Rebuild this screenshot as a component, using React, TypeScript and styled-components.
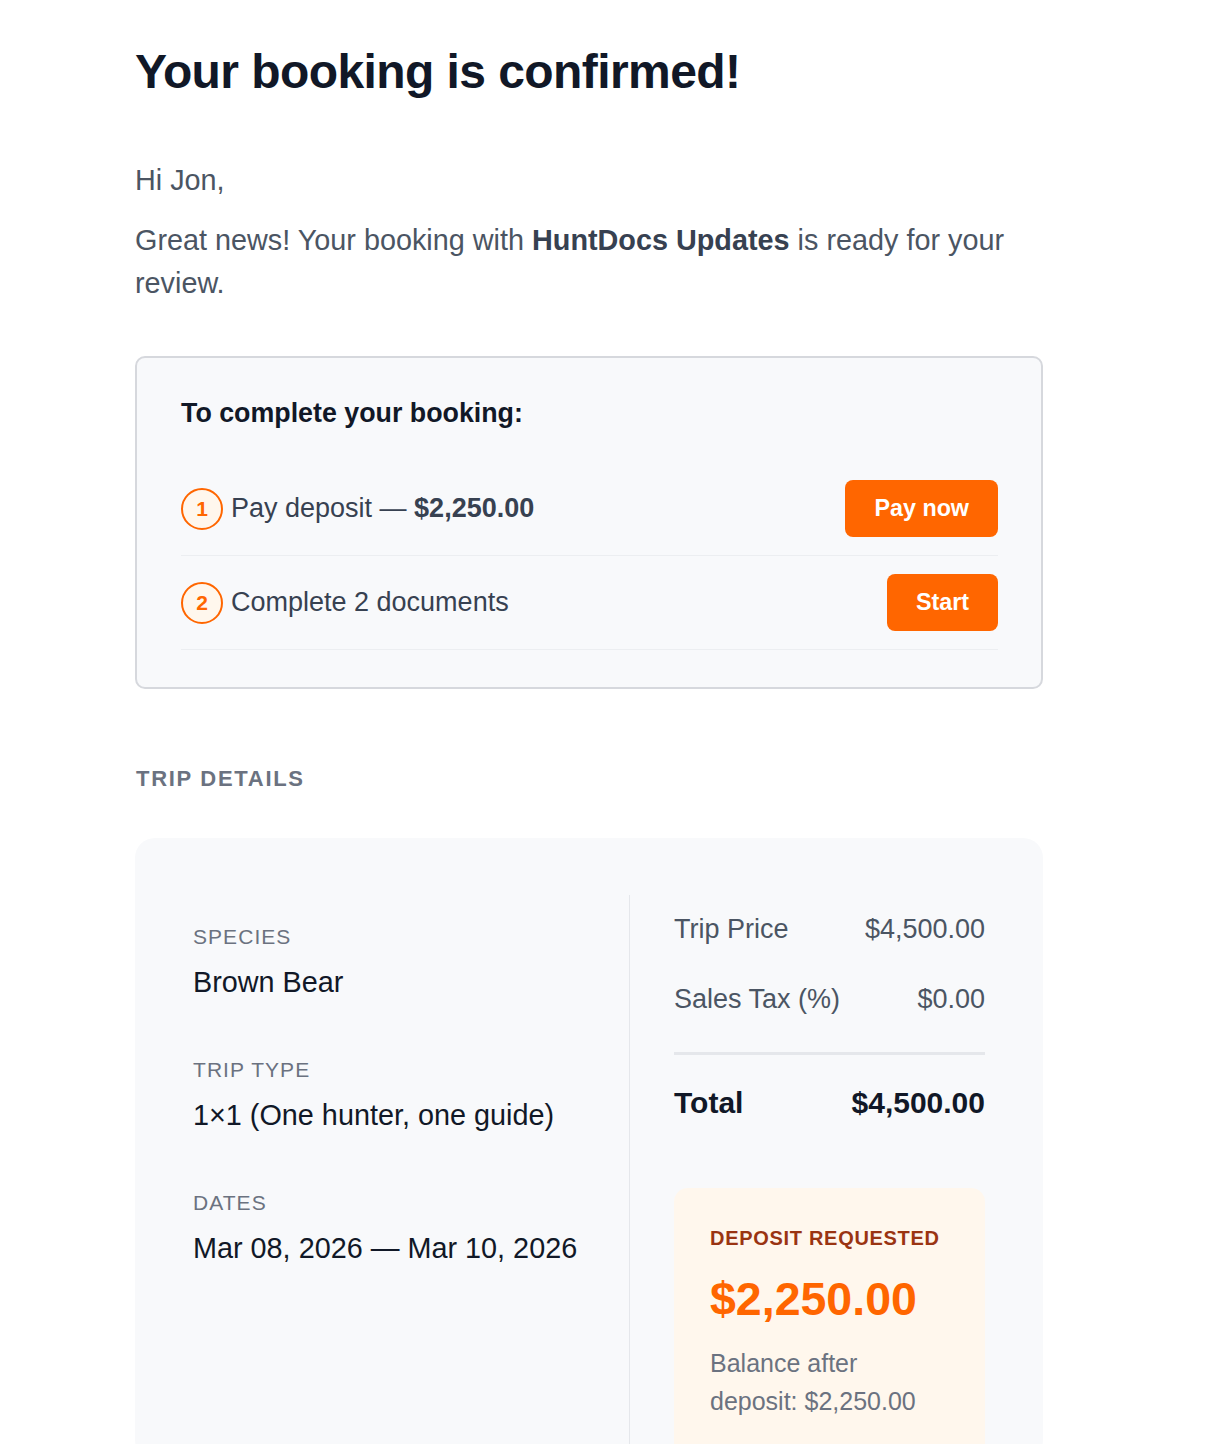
import styled, { createGlobalStyle } from "styled-components";

const GlobalStyle = createGlobalStyle`
  html, body {
    margin: 0;
    padding: 0;
    background: #ffffff;
  }
  body {
    font-family: "Liberation Sans", Arial, Helvetica, sans-serif;
  }
`;

const Page = styled.div`
  width: 908px;
  padding: 43px 0 0 135px;
`;

const Title = styled.h1`
  margin: 0;
  font-size: 48px;
  line-height: 1.2;
  font-weight: 700;
  letter-spacing: -0.012em;
  color: #111827;
`;

const Para = styled.p<{ $top?: number }>`
  margin: ${p => p.$top ?? 0}px 0 0;
  font-size: 28.8px;
  line-height: 1.5;
  color: #4b5563;

  strong {
    color: #374151;
    font-weight: 700;
  }
`;

const StepsCard = styled.div`
  margin-top: 51px;
  background: #f8f9fb;
  border: 2px solid #d6d8dd;
  border-radius: 10px;
  padding: 38px 43px 37px 44px;
`;

const CardTitle = styled.h2`
  margin: 0 0 32px;
  font-size: 26.8px;
  line-height: 34px;
  font-weight: 700;
  color: #111827;
`;

const StepRow = styled.div`
  display: flex;
  align-items: center;
  justify-content: space-between;
  padding: 18px 0;
  border-bottom: 1px solid #eceef1;
`;

const StepLabel = styled.div`
  display: flex;
  align-items: center;
  gap: 8px;
  font-size: 27px;
  color: #374151;

  strong {
    font-weight: 700;
  }
`;

const StepNum = styled.span`
  box-sizing: border-box;
  width: 42px;
  height: 42px;
  border-radius: 50%;
  border: 2px solid #ff6600;
  background: #fff7ed;
  color: #ff6600;
  font-size: 21px;
  font-weight: 700;
  display: flex;
  align-items: center;
  justify-content: center;
`;

const ActionButton = styled.button`
  height: 57px;
  padding: 0 29px;
  border: 0;
  border-radius: 8px;
  background: #ff6600;
  color: #ffffff;
  font-family: inherit;
  font-size: 23.3px;
  font-weight: 700;
  cursor: pointer;
`;

const SectionTitle = styled.h3`
  margin: 75px 0 0 1px;
  font-size: 22px;
  line-height: 1.4;
  font-weight: 700;
  letter-spacing: 1.7px;
  color: #6b7280;
`;

const DetailsCard = styled.div`
  margin-top: 43px;
  background: #f8f9fb;
  border-radius: 20px;
  padding: 57px 58px 0;
  display: flex;
`;

const InfoColumn = styled.div`
  width: 436px;
  padding-top: 27px;
  border-right: 1px solid #e5e7eb;
`;

const InfoGroup = styled.div`
  margin-bottom: 51px;
`;

const InfoLabel = styled.div`
  font-size: 21px;
  line-height: 30.8px;
  letter-spacing: 0.05em;
  color: #6b7280;
`;

const InfoValue = styled.div`
  margin-top: 8px;
  font-size: 28.8px;
  line-height: 1.5;
  color: #111827;
`;

const PriceColumn = styled.div`
  flex: 1;
  padding-left: 44px;
`;

const PriceRow = styled.div<{ $total?: boolean }>`
  display: flex;
  justify-content: space-between;
  padding: ${p => (p.$total ? "25px 0" : "14.5px 0")};
  font-size: ${p => (p.$total ? "30px" : "27px")};
  line-height: 1.5;
  font-weight: ${p => (p.$total ? 700 : 400)};
  color: ${p => (p.$total ? "#111827" : "#4b5563")};
`;

const Rule = styled.div`
  height: 3px;
  margin-top: 18px;
  background: #e5e7eb;
`;

const DepositBox = styled.div`
  margin-top: 38px;
  background: #fff7ed;
  border-radius: 14px 14px 0 0;
  padding: 36px 36px 40px;
`;

const DepositLabel = styled.div`
  font-size: 20px;
  line-height: 28px;
  font-weight: 700;
  letter-spacing: 0.7px;
  color: #9a3412;
`;

const DepositAmount = styled.div`
  margin-top: 20px;
  font-size: 46.5px;
  line-height: 1.2;
  font-weight: 700;
  color: #ff6600;
`;

const DepositNote = styled.div`
  margin-top: 16px;
  font-size: 25px;
  line-height: 38px;
  color: #6b7280;
`;

const steps = [
  { n: 1, label: <>Pay deposit — <strong>$2,250.00</strong></>, action: "Pay now" },
  { n: 2, label: <>Complete 2 documents</>, action: "Start" },
];

const info = [
  { label: "SPECIES", value: "Brown Bear" },
  { label: "TRIP TYPE", value: "1×1 (One hunter, one guide)" },
  { label: "DATES", value: "Mar 08, 2026 — Mar 10, 2026" },
];

export default function App() {
  return (
    <>
      <GlobalStyle />
      <Page>
        <Title>Your booking is confirmed!</Title>
        <Para $top={58}>Hi Jon,</Para>
        <Para $top={17}>
          Great news! Your booking with <strong>HuntDocs Updates</strong> is ready for your review.
        </Para>

        <StepsCard>
          <CardTitle>To complete your booking:</CardTitle>
          {steps.map(s => (
            <StepRow key={s.n}>
              <StepLabel>
                <StepNum>{s.n}</StepNum>
                <span>{s.label}</span>
              </StepLabel>
              <ActionButton>{s.action}</ActionButton>
            </StepRow>
          ))}
        </StepsCard>

        <SectionTitle>TRIP DETAILS</SectionTitle>

        <DetailsCard>
          <InfoColumn>
            {info.map(i => (
              <InfoGroup key={i.label}>
                <InfoLabel>{i.label}</InfoLabel>
                <InfoValue>{i.value}</InfoValue>
              </InfoGroup>
            ))}
          </InfoColumn>
          <PriceColumn>
            <PriceRow>
              <span>Trip Price</span>
              <span>$4,500.00</span>
            </PriceRow>
            <PriceRow>
              <span>Sales Tax (%)</span>
              <span>$0.00</span>
            </PriceRow>
            <Rule />
            <PriceRow $total>
              <span>Total</span>
              <span>$4,500.00</span>
            </PriceRow>
            <DepositBox>
              <DepositLabel>DEPOSIT REQUESTED</DepositLabel>
              <DepositAmount>$2,250.00</DepositAmount>
              <DepositNote>
                Balance after
                <br />
                deposit: $2,250.00
              </DepositNote>
            </DepositBox>
          </PriceColumn>
        </DetailsCard>
      </Page>
    </>
  );
}
